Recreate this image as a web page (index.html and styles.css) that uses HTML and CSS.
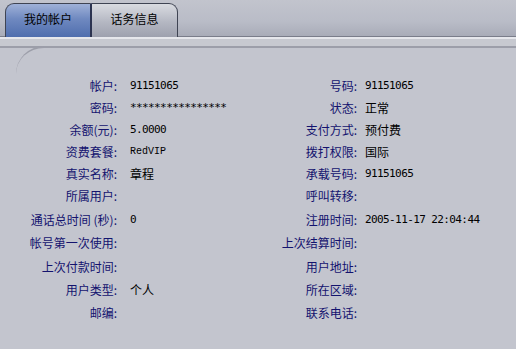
FILE: index.html
```html
<!DOCTYPE html>
<html lang="zh-CN">
<head>
    <meta charset="UTF-8">
    <title>我的帐户</title>
    <link rel="stylesheet" href="styles.css">
</head>
<body>

    <div class="topbar">
        <div class="tabs">
            <div class="tab active">我的帐户</div>
            <div class="tab">话务信息</div>
        </div>
    </div>
    <div class="band"></div>

    <div class="panel">
        <div class="info">
            <div class="label">帐户:</div><div class="value mono">91151065</div>
            <div class="label">号码:</div><div class="value right mono">91151065</div>

            <div class="label">密码:</div><div class="value mono">****************</div>
            <div class="label">状态:</div><div class="value right">正常</div>

            <div class="label">余额(元):</div><div class="value mono">5.0000</div>
            <div class="label">支付方式:</div><div class="value right">预付费</div>

            <div class="label">资费套餐:</div><div class="value serif">RedVIP</div>
            <div class="label">拨打权限:</div><div class="value right">国际</div>

            <div class="label">真实名称:</div><div class="value">章程</div>
            <div class="label">承载号码:</div><div class="value right mono">91151065</div>

            <div class="label">所属用户:</div><div class="value"></div>
            <div class="label">呼叫转移:</div><div class="value right"></div>

            <div class="label">通话总时间 (秒):</div><div class="value mono">0</div>
            <div class="label">注册时间:</div><div class="value right mono">2005-11-17 22:04:44</div>

            <div class="label">帐号第一次使用:</div><div class="value"></div>
            <div class="label">上次结算时间:</div><div class="value right"></div>

            <div class="label">上次付款时间:</div><div class="value"></div>
            <div class="label">用户地址:</div><div class="value right"></div>

            <div class="label">用户类型:</div><div class="value">个人</div>
            <div class="label">所在区域:</div><div class="value right"></div>

            <div class="label">邮编:</div><div class="value"></div>
            <div class="label">联系电话:</div><div class="value right"></div>
        </div>
    </div>

</body>
</html>
```

FILE: styles.css
```css
body {
    margin: 0;
    padding: 0;
    width: 516px;
    height: 349px;
    overflow: hidden;
    background-color: #c3c5ce;
    font-family: "Noto Sans CJK SC", "DejaVu Sans", sans-serif;
    font-size: 12px;
}
.topbar {
    height: 37px;
    background: linear-gradient(#c2c4cd, #b9bcc7 60%, #a9acb8);
    border-bottom: 1px solid #7a7d8a;
    box-sizing: border-box;
    padding: 3px 0 0 5px;
}
.tabs {
    display: flex;
    height: 34px;
}
.tab {
    width: 86px;
    height: 34px;
    box-sizing: border-box;
    border-top: 1px solid #3f4453;
    text-align: center;
    line-height: 30px;
    color: #000;
    background: linear-gradient(#d9dbe1, #b4b7c2 55%, #9ea1ae);
    border-right: 1px solid #3f4453;
    border-top-right-radius: 9px;
}
.tab.active {
    width: 87px;
    background: linear-gradient(#9fb1d8, #6f89c0 45%, #4f6eae);
    border-left: 1px solid #3f4453;
    border-right: 2px solid #2c3350;
    border-radius: 9px 0 0 0;
}
.band {
    height: 11px;
    box-sizing: border-box;
    border-top: 2px solid #e6e7ec;
    border-bottom: 2px solid #9c9ea9;
    background-color: #c7c9d0;
}
.panel {
    margin-left: 16px;
    border-top: 2px solid #9c9ea9;
    border-top-left-radius: 28px;
    margin-top: -2px;
    padding-top: 26px;
}
.info {
    display: grid;
    grid-template-columns: 101px 122px 118px 1fr;
    grid-template-rows: 22px 22px 22px 22px 22px 23px 24px 23px 24px 22px 25px;
    align-items: center;
}
.label {
    text-align: right;
    color: #13136e;
    white-space: nowrap;
}
.value {
    padding-left: 13px;
    color: #000;
    white-space: nowrap;
}
.value.right {
    padding-left: 8px;
}
.mono {
    font-family: "DejaVu Sans Mono", monospace;
    font-size: 11px;
    letter-spacing: -0.6px;
}
.serif {
    font-family: "Liberation Mono", monospace;
    font-size: 10px;
}
```
